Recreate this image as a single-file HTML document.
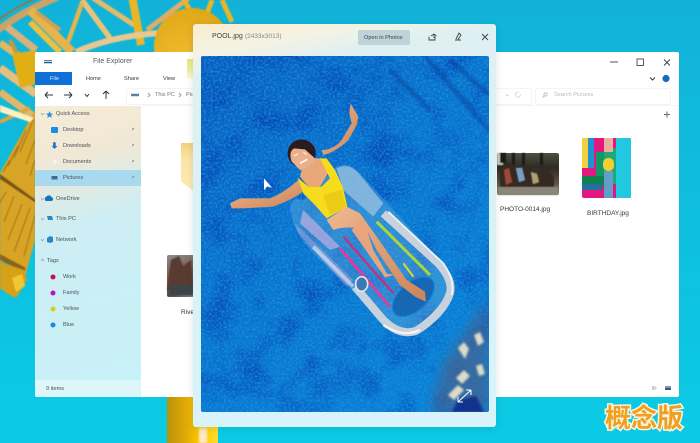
<!DOCTYPE html>
<html><head><meta charset="utf-8"><style>
html,body{margin:0;padding:0;width:700px;height:443px;overflow:hidden;background:#0cc4e0}
body{position:relative;font-family:"Liberation Sans","Noto Sans CJK SC",sans-serif;color:#3c4248}
.a{position:absolute}
.t{position:absolute;white-space:nowrap;font-size:5.6px;line-height:8px;color:#4a5058;filter:blur(.25px)}
svg{position:absolute;left:0;top:0}
</style></head><body>
<svg width="700" height="443" viewBox="0 0 700 443">
<defs>
<linearGradient id="bg" x1="0" y1="0" x2="0" y2="1"><stop offset="0" stop-color="#12b2d8"/><stop offset="1" stop-color="#0bcbe4"/></linearGradient>
<linearGradient id="pil" x1="0" y1="0" x2="1" y2="0"><stop offset="0" stop-color="#b89208"/><stop offset=".35" stop-color="#e0a808"/><stop offset=".7" stop-color="#ffd000"/><stop offset="1" stop-color="#ffda30"/></linearGradient>
<radialGradient id="dome" cx=".4" cy=".7" r=".7"><stop offset="0" stop-color="#f0bc30"/><stop offset="1" stop-color="#e0a818"/></radialGradient>
<filter id="soft"><feGaussianBlur stdDeviation=".6"/></filter>
<filter id="b05"><feGaussianBlur stdDeviation=".4"/></filter>
<filter id="b1"><feGaussianBlur stdDeviation="1"/></filter>
<filter id="b6"><feGaussianBlur stdDeviation="6"/></filter>
</defs>
<rect width="700" height="443" fill="url(#bg)"/>
<g filter="url(#soft)">
<g fill="none">
<path d="M-2 30Q25 10 58 -3" stroke="#c9a468" stroke-width="7"/>
<path d="M-2 20Q20 4 40 -3" stroke="#8a7a50" stroke-width="2"/>
<path d="M7 27L36 50" stroke="#d8b27c" stroke-width="7"/>
<path d="M0 43L36 68" stroke="#e2b860" stroke-width="7"/>
<path d="M0 68L36 94" stroke="#e6c07c" stroke-width="8"/>
<path d="M0 92L36 118" stroke="#e2b868" stroke-width="7"/>
<path d="M0 122L30 108" stroke="#d8a840" stroke-width="4"/>
<path d="M10 40L30 80" stroke="#c89838" stroke-width="4"/>
<path d="M30 10L72 52" stroke="#e6b44c" stroke-width="9"/>
<path d="M30 22L60 52" stroke="#ecc040" stroke-width="6"/>
<path d="M82 0L110 38" stroke="#e8c478" stroke-width="5.500"/>
<path d="M93 -2L134 25" stroke="#e6bb68" stroke-width="5"/>
<path d="M82 3L68 42" stroke="#e4b450" stroke-width="4.500"/>
<path d="M60 30L36 12" stroke="#d4a050" stroke-width="4"/>
<path d="M132 -4L141 45" stroke="#e8b628" stroke-width="8"/>
<path d="M147 30L190 -3" stroke="#dcae68" stroke-width="5"/>
<path d="M76 52Q112 36 160 33" stroke="#e8c890" stroke-width="6"/>
<path d="M184 0L192 14M212 0L206 16M222 0L232 22" stroke="#e8b628" stroke-width="5"/>
</g>
<path d="M12 54L36 50V84L20 88Z" fill="#e2ae18"/>
<circle cx="192" cy="46" r="38" fill="url(#dome)"/>
<path d="M0 173L35 110V240L25 277L8 262L0 262Z" fill="#d8a428"/>
<path d="M0 174L36 200V203L0 179Z" fill="#7a5418"/>
<path d="M0 254L26 268L24 272L0 260Z" fill="#7a5418" opacity=".8"/>
<path d="M10 160L3 172M18 146L8 166M26 130L14 158M34 118L20 152M35 140L26 164M35 160L30 176M6 192L-2 206M14 196L4 222M22 204L8 240M30 208L14 252M36 212L24 256" stroke="#9a7018" stroke-width="1" fill="none"/>
<path d="M0 262L24 270L27 280L16 298L8 294L0 288Z" fill="#d8a018"/>
<path d="M12 278L22 274L25 286L16 292Z" fill="#f0c830"/>
<path d="M0 105L34 118L30 122L0 112Z" fill="#fff0c0"/>
</g>
<rect x="167" y="397" width="51" height="46" fill="url(#pil)"/>
<rect x="199" y="428" width="8" height="15" fill="#ffe8c8" filter="url(#b1)"/>
</svg>

<!-- Explorer -->
<div class="a" style="left:35px;top:52px;width:644px;height:345px;background:#fff;border-radius:2px;overflow:hidden">
  <div class="a" style="left:0;top:54px;width:106px;height:274px;background:linear-gradient(165deg,#f6ecd8 0%,#f0e8d6 20%,#cdeef4 44%,#c8f1f8 100%)"></div>
  <div class="a" style="left:0;top:118px;width:106px;height:16px;background:#a9d9ef"></div>
  <div class="a" style="left:0;top:328px;width:106px;height:17px;background:#dcf6fa"></div>
  <div class="a" style="left:0;top:20px;width:37px;height:13px;background:#0f70d8"></div>
  <div class="a" style="left:91px;top:36px;width:70px;height:15px;border:1px solid #f4f4f6;border-radius:2px"></div>
  <div class="a" style="left:152px;top:7px;width:6px;height:20px;background:linear-gradient(#e6e878,#f0f0a8 60%,#fafae0)"></div>
  <div class="a" style="left:146px;top:91px;width:12px;height:48px;background:linear-gradient(#f3cf80,#fbe3a4 30%,#fcebb4);clip-path:polygon(0 0,100% 0,100% 100%,0 80%)"></div>
  <div class="a" style="left:132px;top:203px;width:28px;height:42px;background:linear-gradient(160deg,#8c8c90,#7a5a48 45%,#4a4a48 80%,#7c8488);border-radius:2px"></div>
  <div class="a" style="left:500px;top:36px;width:134px;height:15px;border:1px solid #f4f4f6;border-radius:2px"></div>
  <div class="a" style="left:440px;top:36px;width:55px;height:15px;border:1px solid #f4f4f6;border-radius:2px"></div>
  <div class="a" style="left:106px;top:53px;width:538px;height:1px;background:#f4f4f6"></div>
  <div class="a" style="left:462px;top:101px;width:62px;height:42px;border-radius:2px;background:linear-gradient(#4c5040,#2e2a24 35%,#5a5048 70%,#8a8880)"></div>
  <div class="a" style="left:547px;top:86px;width:49px;height:60px;border-radius:2px;overflow:hidden;background:#e01880">
    <div class="a" style="left:0;top:0;width:6px;height:30px;background:#f0d040"></div>
    <div class="a" style="left:6px;top:0;width:6px;height:30px;background:#2090d0"></div>
    <div class="a" style="left:34px;top:0;width:15px;height:60px;background:#20c8e0"></div>
    <div class="a" style="left:0;top:38px;width:22px;height:10px;background:#108050"></div>
    <div class="a" style="left:14px;top:14px;width:8px;height:24px;background:#109868"></div>
    <div class="a" style="left:22px;top:10px;width:12px;height:36px;background:#20a878"></div>
    <div class="a" style="left:0;top:46px;width:20px;height:6px;background:#2070a0"></div>
    <div class="a" style="left:22px;top:0;width:9px;height:14px;background:#e8b0a0"></div>
    <div class="a" style="left:21px;top:20px;width:11px;height:13px;background:#f0d030;border-radius:5px"></div>
    <div class="a" style="left:22px;top:33px;width:9px;height:27px;background:#60a0c8"></div>
  </div>
</div>
<svg width="700" height="443" viewBox="0 0 700 443" fill="none" stroke="#3c4248" stroke-width="1">
<g stroke="#2e343a">
<path d="M45 95H53M45 95L48 92M45 95L48 98M64 95H72M72 95L69 92M72 95L69 98M85 94L87 96.500L89 94M106 99V91M106 91L103 94M106 91L109 94"/>
</g>
<path d="M44 60.500H52" stroke="#5a7ea0" stroke-width="1"/><path d="M44 62.500H52" stroke="#2a5a90" stroke-width="1.500"/>
<path d="M131 95H139" stroke="#5a80a8" stroke-width="2.500"/>
<path d="M148 93L150 95L148 97M179 93L181 95L179 97" stroke="#9aa0a6"/>
<path d="M610 62H618" stroke="#6a6e72" stroke-width="1.200"/>
<rect x="637" y="59" width="6.500" height="6.500" stroke="#55595e"/>
<path d="M664 59.500L670 65.500M670 59.500L664 65.500" stroke="#44484c"/>
<path d="M650 77.500L652.500 80L655 77.500" stroke="#33373b"/>
<path d="M664 114.500H670M667 111.500V117.500" stroke="#666a6e"/>
<path d="M520 93.500a2.500 2.500 0 1 1-1-1" stroke="#c8ccd0" stroke-width=".7"/>
<path d="M506 94.500L507.500 96L509 94.500" stroke="#c0c4c8" stroke-width=".7"/>
<circle cx="545.500" cy="94.500" r="1.600" stroke="#a8acb0" stroke-width=".7"/><path d="M544 96L542.500 97.500" stroke="#a8acb0" stroke-width=".7"/>
<path d="M41 113L42.500 115L44 113M41 198L42.500 200L44 198M41 218L42.500 220L44 218M41 239L42.500 241L44 239M41 261L42.500 259L44 261" stroke="#9aa8ac" stroke-width=".7"/>
<g stroke="none">
<circle cx="666" cy="78.500" r="3.600" fill="#1d67bb"/>
<path d="M49.500 111l1 2.500 2.600.2-2 1.600.7 2.600-2.300-1.400-2.300 1.400.7-2.600-2-1.600 2.600-.2z" fill="#2a8fd8"/>
<rect x="51" y="127" width="7" height="6" rx="1" fill="#1a8ee0"/>
<rect x="53" y="142" width="2.800" height="5" rx="1.400" fill="#2478c8"/><path d="M51.500 146h6l-3 3z" fill="#2478c8"/>
<rect x="53" y="160" width="3.500" height="4" fill="#eef4fa"/>
<rect x="51.500" y="176" width="6" height="3.500" fill="#3e6a94"/>
<path d="M46 201a2.500 2.500 0 0 1 .5-4.500a3 3 0 0 1 5 .5a2.200 2.200 0 0 1 .5 4z" fill="#1a70c0"/>
<path d="M47 216h5l1 4h-5z" fill="#2f8ac4"/>
<path d="M47 238l3-2 3 1v5l-3 1-3-1z" fill="#2a88c8"/>
<circle cx="53" cy="277" r="2.500" fill="#c8104c"/>
<circle cx="53" cy="293" r="2.500" fill="#b812c8"/>
<circle cx="53" cy="309" r="2.500" fill="#e0c820"/>
<circle cx="53" cy="325" r="2.500" fill="#1e88e0"/>
<rect x="652" y="386" width="2.500" height="4" fill="#c4cccc"/><path d="M655 386l2 2-2 2z" fill="#c4cccc"/>
<rect x="665" y="386" width="6" height="2" fill="#7a96b0"/><rect x="665" y="388" width="6" height="2" fill="#3a5a78"/>
</g>
<g stroke="#6a6e72" stroke-width=".8">
<path d="M131 129l2-2M131 145l2-2M131 161l2-2M131 177l2-2" transform="translate(1 1)"/>
</g>
</svg>
<span class="t" style="left:93px;top:58px;font-size:7px;color:#585c60">File Explorer</span>
<span class="t" style="left:50px;top:75px;color:#dce8f8">File</span>
<span class="t" style="left:86px;top:75px;color:#33373b">Home</span>
<span class="t" style="left:124px;top:75px;color:#33373b">Share</span>
<span class="t" style="left:163px;top:75px;color:#33373b">View</span>
<span class="t" style="left:155px;top:91px;color:#71767a">This PC</span>
<span class="t" style="left:186px;top:91px;color:#71767a">Pic</span>
<span class="t" style="left:554px;top:91px;color:#b8bcc0">Search Pictures</span>
<span class="t" style="left:56px;top:110px">Quick Access</span>
<span class="t" style="left:63px;top:126px">Desktop</span>
<span class="t" style="left:63px;top:142px">Downloads</span>
<span class="t" style="left:63px;top:158px">Documents</span>
<span class="t" style="left:63px;top:174px">Pictures</span>
<span class="t" style="left:56px;top:195px">OneDrive</span>
<span class="t" style="left:56px;top:215px">This PC</span>
<span class="t" style="left:56px;top:236px">Network</span>
<span class="t" style="left:47px;top:257px">Tags</span>
<span class="t" style="left:63px;top:273px">Work</span>
<span class="t" style="left:63px;top:289px">Family</span>
<span class="t" style="left:63px;top:305px">Yellow</span>
<span class="t" style="left:63px;top:321px">Blue</span>
<span class="t" style="left:46px;top:385px">9 items</span>
<span class="t" style="left:181px;top:309px;font-size:6.500px;color:#33373b">Rive</span>
<span class="t" style="left:500px;top:206px;font-size:6.500px;color:#33373b">PHOTO-0014.jpg</span>
<span class="t" style="left:587px;top:210px;font-size:6.500px;color:#33373b">BIRTHDAY.jpg</span>

<!-- thumbnail details -->
<svg width="700" height="443" viewBox="0 0 700 443">
<g filter="url(#b05)">
<path d="M497 153H503V165H497Z" fill="#c8ccc8"/>
<path d="M500 153h6v10h-6zM512 153h3v12h-3zM522 153h3v12h-3zM540 153h3v12h-3z" fill="#1c1c14"/>
<path d="M500 166l8-4 8 6 10-3 10 8 10-6 8 10v10h-54z" fill="#342a24"/>
<path d="M504 170l5-2 3 14-6 3z" fill="#a04838"/>
<path d="M531 172l6 2 2 8-6 2z" fill="#b0a070"/>
<path d="M516 168l6 0 3 12-6 2z" fill="#7aa0c4"/>
<path d="M498 187h60v8h-60z" fill="#8a8678"/>
<path d="M171 260l8-4 4 10 8-6 2 30h-26z" fill="#5a3a30"/>
<path d="M170 285h23v10h-23z" fill="#3c4446"/>
</g>
</svg>

<!-- Viewer dialog -->
<div class="a" style="left:193px;top:24px;width:303px;height:403px;border-radius:3px;background:linear-gradient(170deg,#fbeccd 0%,#f4f3e4 7%,#dff0f2 12%,#d8f2f8 50%,#d8f3fa 100%);box-shadow:0 2px 8px rgba(0,40,60,.12)"></div>
<div class="a" style="left:358px;top:30px;width:52px;height:15px;background:#c0d3d9;border-radius:2px"></div>
<span class="t" style="left:212px;top:33px;font-size:7px;color:#3e4448">POOL.jpg</span>
<span class="t" style="left:245px;top:33px;font-size:6.500px;color:#80868a">(2433x3013)</span>
<span class="t" style="left:364px;top:33.500px;color:#3e4448">Open in Photos</span>

<!-- Photo -->
<svg width="700" height="443" viewBox="0 0 700 443">
<defs>
<clipPath id="pc"><rect x="201" y="56" width="288" height="356" rx="2"/></clipPath>
<filter id="water" x="0" y="0" width="100%" height="100%" color-interpolation-filters="sRGB">
<feTurbulence type="fractalNoise" baseFrequency=".45" numOctaves="2" seed="5"/>
<feColorMatrix values="0 0 0 0 .1  0 0 0 0 .58  0 0 0 0 .95  2 0 0 0 -.82"/>
</filter>
<filter id="deep" x="0" y="0" width="100%" height="100%" color-interpolation-filters="sRGB">
<feTurbulence type="fractalNoise" baseFrequency=".03" numOctaves="3" seed="11"/>
<feColorMatrix values="0 0 0 0 .02  0 0 0 0 .22  0 0 0 0 .66  2.500 0 0 0 -1.100"/>
</filter>
<linearGradient id="wg" x1="0" y1="0" x2=".7" y2="1"><stop offset="0" stop-color="#0a5cb8"/><stop offset=".45" stop-color="#0a72c8"/><stop offset="1" stop-color="#0a80d0"/></linearGradient>
<linearGradient id="sk" x1="0" y1="0" x2="1" y2="1"><stop offset="0" stop-color="#f0b890"/><stop offset="1" stop-color="#cc8458"/></linearGradient>
</defs>
<g clip-path="url(#pc)">
<rect x="201" y="56" width="288" height="356" fill="url(#wg)"/>
<rect x="201" y="56" width="288" height="356" filter="url(#deep)" opacity=".6"/>
<rect x="201" y="56" width="288" height="356" filter="url(#water)"/>
<g fill="none" stroke="#0a3f98" stroke-width="5" opacity=".45" filter="url(#b1)">
<path d="M425 56L489 130M450 60L489 95M390 70L430 110"/>
</g>
<path d="M489 300L489 412H430L445 360Z" fill="#48628c" opacity=".7" filter="url(#b6)"/>
<g filter="url(#b1)" fill="#dcdcc8">
<path d="M458 348l6-6 5 7-4 10zM474 335l6-3 4 10-6 4zM456 378l8-8 6 6-8 8zM448 395l10-10 6 5-10 10zM476 366l6-2 3 10-6 2z"/>
</g>
<path d="M452 412l6-12 18-4 8 16z" fill="#0a2a88" opacity=".85" filter="url(#b1)"/>

<!-- float, zoom-crop coordinates mapped to page -->
<g transform="translate(220 90) scale(.3333)" filter="url(#b05)">
<path d="M210 350Q215 320 250 330L350 230Q385 215 420 250L640 490Q700 560 690 610Q670 680 590 730Q540 745 490 690L280 490Q215 420 210 350Z" fill="#6cb0dc" opacity=".38"/>
<path d="M350 235Q390 215 420 255L490 340L460 380L370 300Z" fill="#b4d0e4" opacity=".6"/>
<path d="M250 360L360 470L330 480L240 400Z" fill="#d8b8e4" opacity=".6"/>
<path d="M225 400L400 570L380 590L235 430Z" fill="#c8a8e0" opacity=".4"/>
<path d="M490 370L655 520Q700 570 690 610Q670 670 590 722Q540 740 490 690L405 590" fill="none" stroke="#c8d2dc" stroke-width="24" stroke-linejoin="round"/>
<path d="M505 365L670 520Q705 570 695 615" fill="none" stroke="#f0f4f6" stroke-width="5"/>
<path d="M490 705Q550 745 600 720" fill="none" stroke="#f0f2f4" stroke-width="7"/>
<path d="M280 470L400 590" fill="none" stroke="#dfe6ee" stroke-width="12" opacity=".65"/>
<path d="M470 395L630 555" stroke="#a8d838" stroke-width="9" fill="none"/>
<path d="M550 520L580 560" stroke="#e8d820" stroke-width="6" fill="none"/>
<path d="M370 440L520 610" stroke="#d82870" stroke-width="6" fill="none"/>
<path d="M360 475L510 650" stroke="#e83898" stroke-width="8" fill="none"/>
<ellipse cx="580" cy="620" rx="75" ry="42" transform="rotate(-42 580 620)" fill="#1468b4" stroke="#1280c8" stroke-width="4"/>
<ellipse cx="425" cy="582" rx="18" ry="22" fill="#3a78b8" stroke="#dfe6ec" stroke-width="5"/>
<path d="M235 270Q190 310 150 325L60 325L30 340L35 355L70 355L160 350Q215 330 250 305Z" fill="url(#sk)"/>
<path d="M310 195Q350 185 385 150L410 105L415 80L392 40L388 70L395 100L365 150Q340 180 305 180Z" fill="url(#sk)"/>
<path d="M255 200L290 205L305 205L330 240L300 290L265 290L240 260Z" fill="#e8a878"/>
<path d="M232 262L265 290L305 290L330 265L300 205L320 205L345 240L368 290L382 350L320 385L285 345L250 310Z" fill="#f6dc1c"/>
<path d="M310 315L365 300L378 350L330 375Z" fill="#eccb18"/>
<path d="M320 390L380 350L420 370L470 440L560 570L615 605L618 635L585 620L540 585L470 480L440 420Q380 405 340 420Z" fill="url(#sk)"/>
<path d="M395 420L430 385L460 480L500 550L522 555L495 562L465 520Z" fill="#e8a47c"/>
<ellipse cx="245" cy="190" rx="42" ry="42" fill="#2a1c1c"/>
<path d="M215 215Q205 185 222 175L255 178L285 205Q275 235 240 240Z" fill="#eab08c"/>
<path d="M240 220l22 -12" stroke="#fff" stroke-width="5"/>
<path d="M222 198l12-6M250 186l10 8" stroke="#f4ece4" stroke-width="4"/>
<path d="M132 265L132 300L142 289L156 293Z" fill="#fff"/>
</g>
<path d="M458 402L471 390M458 402L458 397M458 402L463 402M471 390L466 390M471 390L471 395" stroke="#fff" stroke-width="1" fill="none"/>
</g>
<g fill="none" stroke="#3c4248" stroke-width=".9">
<path d="M429 36.500L429 40H435V36.500M431 36L434 34L436.500 36M434 34V38"/>
<path d="M455 40H461M456 39L459 33L461 35L458 39.500"/>
<path d="M482 34L488 40M488 34L482 40"/>
</g>
</svg>

<div class="a" style="left:605px;top:402px;font-family:'Noto Sans CJK SC',sans-serif;font-weight:700;font-size:26px;line-height:30px;color:#f0a020;-webkit-text-stroke:3px #fbf3dc;paint-order:stroke fill;letter-spacing:0;white-space:nowrap">概念版</div>
</body></html>
